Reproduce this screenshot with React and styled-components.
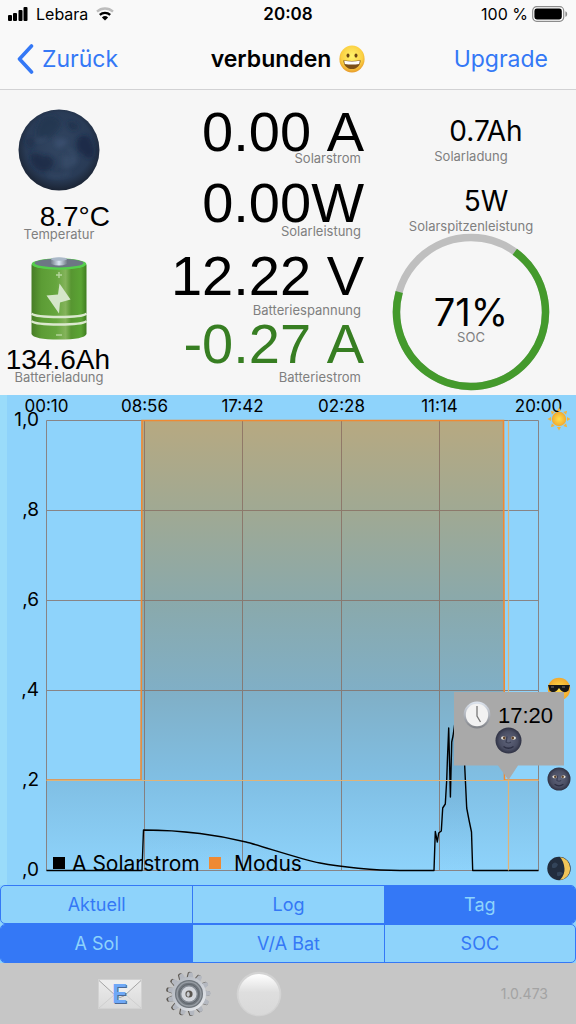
import React, { useState } from 'react'
import styled, { createGlobalStyle } from 'styled-components'

const GlobalStyle = createGlobalStyle`
    *{
        box-sizing: border-box;
    }
    body{
        margin: 0;
        background-color: #f6f6f6;
        color: #000;
        font-family: Inter, 'Noto Sans', sans-serif;
    }
    button{
        font-family: inherit;
        cursor: pointer;
    }
    svg{
        display: block;
    }
`

const blue = '#3478f6'
const sky = '#8ed3fb'

/* ---------- small drawings ---------- */

const SignalIcon = () => (
    <svg width="20" height="14" viewBox="0 0 20 14" aria-hidden="true">
        <rect x="0" y="8" width="4" height="6" rx="1" />
        <rect x="5" y="6" width="4" height="8" rx="1" />
        <rect x="10.5" y="3" width="4" height="11" rx="1" />
        <rect x="15.5" y="0" width="4" height="14" rx="1" />
    </svg>
)

const WifiIcon = () => (
    <svg width="18" height="14" viewBox="0 0 18 14" fill="none" aria-hidden="true">
        <path d="M1 4.6a12 12 0 0 1 16 0" stroke="#bdbdbd" strokeWidth="2.4" />
        <path d="M3.8 7.8a8 8 0 0 1 10.4 0" stroke="#000" strokeWidth="2.4" />
        <path d="M9 13.6 5.9 10.4a4.6 4.6 0 0 1 6.2 0Z" fill="#000" />
    </svg>
)

const BatteryLevelIcon = () => (
    <svg width="36" height="16" viewBox="0 0 36 16" aria-hidden="true">
        <rect x=".7" y=".7" width="31" height="14.6" rx="4" fill="#fff" stroke="#8c8c8c" strokeWidth="1.2" />
        <rect x="2.4" y="2.6" width="27.4" height="10.8" rx="2.4" />
        <path d="M33.4 5.2c2.4.8 2.4 4.8 0 5.6Z" fill="#8c8c8c" />
    </svg>
)

const ChevronIcon = () => (
    <svg width="18" height="30" viewBox="0 0 18 30" fill="none" aria-hidden="true">
        <path d="M15.5 2 3.5 15l12 13" stroke={blue} strokeWidth="3.6" strokeLinecap="round" strokeLinejoin="round" />
    </svg>
)

const GrinIcon = () => (
    <svg width="26" height="28" viewBox="0 0 26 28" role="img" aria-label="verbunden">
        <defs>
            <radialGradient id="grin" cx=".5" cy=".4" r=".6">
                <stop offset="0" stopColor="#fff36b" />
                <stop offset=".7" stopColor="#fbd043" />
                <stop offset="1" stopColor="#e79a2a" />
            </radialGradient>
        </defs>
        <ellipse cx="13" cy="14" rx="12.6" ry="13.4" fill="url(#grin)" />
        <ellipse cx="9" cy="10.6" rx="1.5" ry="2.1" fill="#6b4312" />
        <ellipse cx="17" cy="10.6" rx="1.5" ry="2.1" fill="#6b4312" />
        <path d="M4.4 15.2q8.6 1.6 17.2 0c0 5-3.6 8.8-8.6 8.8s-8.6-3.8-8.6-8.8Z" fill="#7b4f1a" />
        <path d="M5.2 15.8q7.8 1.3 15.6 0l-.6 3.2q-7.2 1.2-14.4 0Z" fill="#fff" />
    </svg>
)

const MoonIcon = () => (
    <svg width="82" height="82" viewBox="0 0 82 82" role="img" aria-label="Neumond">
        <defs>
            <radialGradient id="moon" cx=".5" cy=".45" r=".55">
                <stop offset="0" stopColor="#324662" />
                <stop offset=".75" stopColor="#293b56" />
                <stop offset="1" stopColor="#1b2434" />
            </radialGradient>
            <filter id="soft"><feGaussianBlur stdDeviation="2" /></filter>
            <clipPath id="moonDisc"><circle cx="41" cy="41" r="39" /></clipPath>
        </defs>
        <circle cx="41" cy="41" r="40.5" fill="url(#moon)" />
        <g filter="url(#soft)" clipPath="url(#moonDisc)">
            <path d="M22 12q8-8 17-3 7 5 1 12-6 9-14 9t-8-8Z" fill="#22324d" opacity=".6" />
            <path d="M60 29q8-6 13 2 5 9 2 17-6 3-10-3-10-5-5-16Z" fill="#1a2844" opacity=".8" />
            <path d="M12 46q7-4 12 1 9-1 12 5-1 8-8 10-9 1-14-7Z" fill="#1a2844" opacity=".75" />
            <path d="M49 13q7-1 12 5-3 5-9 2Z" fill="#1e2d49" opacity=".7" />
            <path d="M37 31q8-3 13 1-3 7-12 6Z" fill="#42587a" opacity=".5" />
            <path d="M44 47q10-2 16 4-5 11-16 8Z" fill="#3b5171" opacity=".5" />
            <path d="M6 31q8-4 12 0l-5 10Z" fill="#1e2d49" opacity=".6" />
            <path d="M18 31q7 2 10-4M50 40q8 6 6 12M30 66q12 3 22-2" stroke="#435a7b" strokeWidth="1.5" fill="none" opacity=".7" />
        </g>
    </svg>
)

const BatteryIcon = () => (
    <svg width="56" height="83" viewBox="0 0 56 83" role="img" aria-label="Batterie">
        <defs>
            <linearGradient id="cell">
                <stop offset="0" stopColor="#477d26" />
                <stop offset=".18" stopColor="#5c9c35" />
                <stop offset=".45" stopColor="#66a63e" />
                <stop offset=".62" stopColor="#84b35b" />
                <stop offset=".72" stopColor="#579631" />
                <stop offset=".9" stopColor="#5ba434" />
                <stop offset="1" stopColor="#3f7d20" />
            </linearGradient>
            <linearGradient id="metal">
                <stop offset="0" stopColor="#75808c" />
                <stop offset=".5" stopColor="#dbe7f3" />
                <stop offset="1" stopColor="#737e88" />
            </linearGradient>
        </defs>
        <path d="M.5 8C2 0 54 0 55.5 8v69q-2 5.5-27.5 5.5T.5 77Z" fill="url(#cell)" />
        <ellipse cx="28" cy="7" rx="27.3" ry="5.8" fill="#55cf4b" />
        <ellipse cx="28" cy="6" rx="24.5" ry="4.4" fill="#6d7784" />
        <path d="M20 2q8-3 16 0v5q-8 3-16 0Z" fill="url(#metal)" />
        <ellipse cx="28" cy="2" rx="8" ry="1.7" fill="#aab8c8" />
        <path d="M28 15v6M25 18h6" stroke="#b5d69d" strokeWidth="1.4" />
        <path d="M28.5 26.5 27 37.5 15.5 38.5 28 56.5 29 45.5 39.5 42.5Z" fill="#d5e6ca" />
        <path d="M.5 56.5q3 3.5 27.5 3.5t27.5-3.5M.5 64q3 3.5 27.5 3.5T55.5 64" stroke="#dbe8ce" strokeWidth="2.6" fill="none" />
        <path d="M25 78h6" stroke="#b5d69d" strokeWidth="1.4" />
    </svg>
)

const MailIcon = () => (
    <svg width="44" height="30" viewBox="0 0 44 30" aria-hidden="true">
        <defs>
            <linearGradient id="mail" x2="0" y2="1">
                <stop offset="0" stopColor="#ececec" />
                <stop offset="1" stopColor="#dadada" />
            </linearGradient>
        </defs>
        <rect x=".5" y=".5" width="43" height="29" fill="url(#mail)" stroke="#d2d2d2" />
        <path d="M1 1.5 18 17q4 3 8 0L43 1.5" fill="#ededed" stroke="#a5a5a5" />
        <path d="M1 29 16 16M43 29 28 16" stroke="#cfcfcf" />
        <text x="22.5" y="25" textAnchor="middle" fontFamily="Inter, sans-serif" fontSize="25" fontWeight="700" fill="#4b6894">E</text>
        <text x="21.5" y="24" textAnchor="middle" fontFamily="Inter, sans-serif" fontSize="25" fontWeight="700" fill="#6ea8f7">E</text>
    </svg>
)

const teeth = Array.from({ length: 13 }, (_, i) => i * 360 / 13 + 5)

const GearIcon = () => (
    <svg width="46" height="46" viewBox="0 0 46 46" aria-hidden="true">
        <defs>
            <linearGradient id="gear" x2="1" y2="1">
                <stop offset="0" stopColor="#aeb3bb" />
                <stop offset=".5" stopColor="#c8ccd3" />
                <stop offset="1" stopColor="#eef0f3" />
            </linearGradient>
        </defs>
        {teeth.map(a => (
            <path key={a} d="M20 8 21 1.5q2-1.5 4 0L26 8Z" fill="#5c5750" transform={`translate(-1 0) rotate(${a} 23 23)`} />
        ))}
        {teeth.map(a => (
            <path key={a} d="M20 8 21 2q2-1.5 4 0L26 8Z" fill="#b4b8c0" transform={`rotate(${a} 23 23)`} />
        ))}
        <circle cx="23" cy="23" r="17" fill="url(#gear)" />
        <circle cx="23" cy="23" r="14" fill="#6f757c" />
        <circle cx="23" cy="23" r="12" fill="none" stroke="#969ca3" strokeWidth="1.5" />
        <circle cx="23" cy="23" r="9.5" fill="#858b93" stroke="#5f656c" />
        <circle cx="23" cy="23" r="7.6" fill="#d3d6dc" />
        <circle cx="23" cy="23" r="3.6" fill="#5a5550" />
        <path d="M22 20.5a3 3 0 0 1 0 5.5q-3-2.5 0-5.5Z" fill="#c9ccd1" />
    </svg>
)

const BallIcon = () => (
    <svg width="46" height="46" viewBox="0 0 46 46" aria-hidden="true">
        <defs>
            <linearGradient id="ball" x2="0" y2="1">
                <stop offset="0" stopColor="#fff" />
                <stop offset=".45" stopColor="#dedede" />
                <stop offset="1" stopColor="#d9d9d9" />
            </linearGradient>
        </defs>
        <circle cx="23" cy="23" r="22.3" fill="#d3d3d3" />
        <circle cx="23" cy="23.5" r="20.5" fill="url(#ball)" />
    </svg>
)

const MoonFace = ({ x, y, r }) => (
    <g transform={`translate(${x} ${y}) scale(${r / 13})`}>
        <circle r="13" fill="url(#face)" />
        <path d="M-1.5-4Q-2 0-2.5 1.5 0 3.5 2.5 1.5" fill="none" stroke="#3a3e53" strokeWidth="1.2" />
        <ellipse cx="-5" cy="-2.5" rx="2.5" ry="1.7" fill="#e6e2d8" />
        <ellipse cx="5" cy="-2.5" rx="2.5" ry="1.7" fill="#e6e2d8" />
        <circle cx="-4.2" cy="-2.5" r="1.4" fill="#5e432c" />
        <circle cx="4.2" cy="-2.5" r="1.4" fill="#5e432c" />
        <path d="M-5 6q5 3.5 10 0" fill="none" stroke="#2b2e42" strokeWidth="1.3" />
    </g>
)

/* ---------- chart ---------- */

const LEFT = 46.5
const RIGHT = 538.5
const TOP = 25.5
const BOTTOM = 475.5

const times = ['00:10', '08:56', '17:42', '02:28', '11:14', '20:00']
const levels = ['1,0', ',8', ',6', ',4', ',2', ',0']
const columns = [46.5, 144.5, 242.5, 341.5, 439.5, 538.5]

const levelY = i => TOP + i * 90

const solar = `M${LEFT} ${BOTTOM}H142L143.5 435C160 435 180 436 200 438.5S230 443 246 447S300 464 320 468
    S375 475.5 400 475.5H434L435.3 436.5 437.3 447 438.7 438 441.3 436 442.7 413 445.3 409 446.7 385
    447.5 362 448.7 333 450.4 402 451.7 347 453 341 456 320 460 318 464 350 464.7 371 466.7 413 469 425 471.5 437 472.7 ${BOTTOM}H${RIGHT}`
const modus = `M${LEFT} 385H141L142 ${TOP}H503.5L504.5 385H${RIGHT}`

const Chart = () => (
    <ChartSvg viewBox="0 0 576 490" role="img" aria-label="Verlauf Solarstrom und Modus">
        <defs>
            <linearGradient id="modusFill" gradientUnits="userSpaceOnUse" x1="0" y1={TOP} x2="0" y2={BOTTOM}>
                <stop offset="0" stopColor="#b7a981" />
                <stop offset=".2" stopColor="#a0a993" />
                <stop offset=".4" stopColor="#8aa9ab" />
                <stop offset=".6" stopColor="#80afc6" />
                <stop offset=".8" stopColor="#80bfe4" />
                <stop offset="1" stopColor={sky} />
            </linearGradient>
            <linearGradient id="solarFill" gradientUnits="userSpaceOnUse" x1="0" y1="330" x2="0" y2={BOTTOM}>
                <stop offset="0" stopColor="#4a7a98" stopOpacity=".4" />
                <stop offset="1" stopColor="#6aaede" stopOpacity="0" />
            </linearGradient>
            <radialGradient id="face">
                <stop offset="0" stopColor="#60657c" />
                <stop offset=".7" stopColor="#4a4e63" />
                <stop offset="1" stopColor="#2f3244" />
            </radialGradient>
            <radialGradient id="sun">
                <stop offset="0" stopColor="#ffe14d" />
                <stop offset="1" stopColor="#f2a92e" />
            </radialGradient>
            <linearGradient id="clock" x2="0" y2="1">
                <stop offset="0" stopColor="#dfe6f0" />
                <stop offset="1" stopColor="#7f8186" />
            </linearGradient>
        </defs>

        <rect width="7" height="490" fill="#9adcfa" />

        <path d={`${modus}V${BOTTOM}H${LEFT}Z`} fill="url(#modusFill)" />
        <path d={`${solar}Z`} fill="url(#solarFill)" />

        <g stroke="#866a5e" strokeWidth="1" opacity=".75">
            {columns.map(x => <path key={x} d={`M${x} ${TOP}V${BOTTOM}`} />)}
            {levels.map((l, i) => <path key={l} d={`M${LEFT} ${levelY(i)}H${RIGHT}`} />)}
        </g>

        <path d={modus} fill="none" stroke="#ef8a33" strokeWidth="1.6" />
        <path d={solar} fill="none" stroke="#000" strokeWidth="1.4" strokeLinejoin="round" />
        <path d={`M508.5 ${TOP}V${BOTTOM}M${LEFT} 385.5H${RIGHT}`} stroke="#dfb377" strokeWidth="1.2" />

        <g fontSize="17" textAnchor="middle">
            {times.map((t, i) => <text key={t} x={columns[i]} y="17">{t}</text>)}
        </g>
        <g fontSize="19" textAnchor="end">
            {levels.map((l, i) => <text key={l} x="39" y={levelY(i) + 5}>{l}</text>)}
        </g>

        <rect x="53" y="462" width="12" height="12" />
        <rect x="209" y="462" width="12" height="12" fill="#ef8a33" />
        <g fontSize="21">
            <text x="72" y="476">A Solarstrom</text>
            <text x="234" y="476">Modus</text>
        </g>

        {/* sun */}
        <g transform="translate(559 24)">
            {Array.from({ length: 8 }, (_, i) => (
                <path key={i} d="M-2-8 0-11.5l2 3.5Z" fill="#f3b43c" transform={`rotate(${i * 45})`} />
            ))}
            <circle r="7.2" fill="url(#sun)" />
        </g>
        {/* cool face */}
        <g transform="translate(559 294)">
            <circle r="11.2" fill="url(#sun)" />
            <path d="M-11-4H11L9.5 1.5Q6 5 2 1.5L0-1-2 1.5Q-6 5-9.5 1.5Z" fill="#171717" />
            <path d="M-8-2h3M3-2h3" stroke="#777" />
        </g>
        <MoonFace x={559} y={384} r={11.5} />
        {/* crescent */}
        <g transform="translate(559 473.5)">
            <circle r="11.7" fill="#222d3e" />
            <path d="M1-11.6A11.7 11.7 0 0 1 1 11.6Q6 6 5.5 0 5-7 1-11.6Z" fill="#f0c458" />
            <path d="M-7-4q3-4 6 0-2 5-6 3ZM-2 4q4-2 6 1-4 4-6 2Z" fill="#33445a" />
        </g>

        {/* marker */}
        <path d="M454 297H564V370.5H518L508.5 385 498 370.5H454Z" fill="#a9a9a9" />
        <circle cx="477" cy="320" r="13.4" fill="url(#clock)" />
        <circle cx="477" cy="320" r="11.2" fill="#f2f2f2" />
        <path d="M477 311V321L480.5 327" fill="none" stroke="#777" strokeWidth="1.3" />
        <text x="498" y="328" fontSize="22" fontFamily="'Liberation Sans', Arial, sans-serif">17:20</text>
        <MoonFace x={508.5} y={345.5} r={13} />
    </ChartSvg>
)

/* ---------- metrics ---------- */

const Metric = ({ value, label, ...rest }) => (
    <MetricStyled {...rest}>
        <dd>{value}</dd>
        <dt>{label}</dt>
    </MetricStyled>
)

const Gauge = () => (
    <GaugeStyled>
        <svg width="158" height="158" viewBox="0 0 158 158" fill="none" strokeWidth="7.5" aria-hidden="true">
            <circle cx="79" cy="79" r="74.5" stroke="#bfbfbf" />
            <circle cx="79" cy="79" r="74.5" stroke="#449a2c" pathLength="360" strokeDasharray="249.5 360" transform="rotate(-54 79 79)" />
        </svg>
        <GaugeText>
            <dd>71%</dd>
            <dt>SOC</dt>
        </GaugeText>
    </GaugeStyled>
)

const ranges = ['Aktuell', 'Log', 'Tag']
const series = ['A Sol', 'V/A Bat', 'SOC']

const Segments = ({ label, options, selected, onSelect }) => (
    <SegmentsStyled role="group" aria-label={label}>
        {options.map(option => (
            <Segment
                key={option}
                type="button"
                $active={option === selected}
                aria-pressed={option === selected}
                onClick={() => onSelect(option)}
            >
                {option}
            </Segment>
        ))}
    </SegmentsStyled>
)

const App = () => {

    const [range, setRange] = useState('Tag')
    const [shown, setShown] = useState('A Sol')

    return (
        <>
            <GlobalStyle />
            <Header>
                <StatusBar>
                    <div><SignalIcon /><span>Lebara</span><WifiIcon /></div>
                    <strong>20:08</strong>
                    <div><span>100 %</span><BatteryLevelIcon /></div>
                </StatusBar>
                <NavBar>
                    <NavButton type="button"><ChevronIcon />Zurück</NavButton>
                    <h1>verbunden <GrinIcon /></h1>
                    <NavButton type="button" $end>Upgrade</NavButton>
                </NavBar>
            </Header>
            <main>
                <Dashboard>
                    <SideColumn>
                        <MoonIcon />
                        <Metric value="8.7°C" label="Temperatur" $kind="side" />
                        <BatteryIcon />
                        <Metric value="134.6Ah" label="Batterieladung" $kind="side" />
                    </SideColumn>
                    <MainColumn>
                        <Metric value="0.00 A" label="Solarstrom" $kind="main" />
                        <Metric value="0.00W" label="Solarleistung" $kind="main" $gap={2} />
                        <Metric value="12.22 V" label="Batteriespannung" $kind="main" $gap={8} />
                        <Metric value="-0.27 A" label="Batteriestrom" $kind="main" $gap={7} $color="#377e22" />
                    </MainColumn>
                    <TotalsColumn>
                        <Metric value="0.7Ah" label="Solarladung" $kind="total" $gap={8} />
                        <Metric value="5W" label="Solarspitzenleistung" $kind="total" $gap={8} />
                        <Gauge />
                    </TotalsColumn>
                </Dashboard>
                <ChartPanel>
                    <Chart />
                    <Segments label="Zeitraum" options={ranges} selected={range} onSelect={setRange} />
                    <Segments label="Messwert" options={series} selected={shown} onSelect={setShown} />
                </ChartPanel>
            </main>
            <Toolbar>
                <ToolButton type="button" aria-label="E-Mail"><MailIcon /></ToolButton>
                <ToolButton type="button" aria-label="Einstellungen"><GearIcon /></ToolButton>
                <ToolButton type="button" aria-label="Status"><BallIcon /></ToolButton>
                <Version>1.0.473</Version>
            </Toolbar>
        </>
    )
}

const Header = styled.header`
    background-color: #f9f9f9;
    border-bottom: 1px solid #d2d2d4;
`

const StatusBar = styled.div`
    display: grid;
    grid-template-columns: 1fr auto 1fr;
    align-items: center;
    height: 28px;
    padding: 0 8px;
    font-size: 16px;
    div{
        display: flex;
        align-items: center;
        gap: 8px;
    }
    div:last-child{
        justify-content: flex-end;
        gap: 4px;
    }
    strong{
        font-size: 17px;
        font-weight: 600;
    }
`

const NavBar = styled.nav`
    display: grid;
    grid-template-columns: 1fr auto 1fr;
    align-items: center;
    height: 61px;
    padding: 0 16px;
    h1{
        display: flex;
        align-items: center;
        gap: 8px;
        margin: 0;
        font-size: 23px;
        font-weight: 600;
    }
`

const NavButton = styled.button`
    display: flex;
    align-items: center;
    justify-self: ${p => p.$end ? 'end' : 'start'};
    gap: 8px;
    padding: ${p => p.$end ? '0 12px 0 0' : '0'};
    border: none;
    background: none;
    color: ${blue};
    font-size: 23px;
`

const Dashboard = styled.section`
    display: grid;
    grid-template-columns: 118fr 248fr 210fr;
    min-height: 305px;
`

const Column = styled.div`
    display: flex;
    flex-direction: column;
    min-width: 0;
`

const SideColumn = styled(Column)`
    align-items: center;
    padding-top: 19px;
    svg{
        margin-bottom: 16px;
    }
    dl + svg{
        margin-top: 16px;
        margin-bottom: 10px;
    }
`

const MainColumn = styled(Column)`
    padding: 23px 2px 0 0;
    gap: 19px;
    > :last-child{
        margin-top: -11px;
    }
`

const TotalsColumn = styled(Column)`
    align-items: center;
    padding-top: 31px;
    > :nth-child(2){
        margin-top: 28px;
    }
`

const kinds = {
    side: `
        width: 100%;
        dd{
            padding-right: 8px;
            font: 28px/20px 'Liberation Sans', Arial, sans-serif;
            text-align: right;
        }
        dt{
            text-align: center;
        }
    `,
    main: `
        text-align: right;
        dd{
            font: 56px/38px 'Liberation Sans', Arial, sans-serif;
            font-kerning: none;
        }
        dt{
            padding-right: 3px;
        }
    `,
    total: `
        text-align: center;
        dd{
            padding-left: 30px;
            font-size: 28px;
            line-height: 20px;
        }
    `,
}

const MetricStyled = styled.dl`
    display: flex;
    flex-direction: column;
    gap: ${p => p.$gap || 0}px;
    margin: 0;
    white-space: nowrap;
    dd{
        margin: 0;
        color: ${p => p.$color || '#000'};
    }
    dt{
        color: #7f7f7f;
        font-size: 13px;
        line-height: 14px;
    }
    ${p => kinds[p.$kind]}
`

const GaugeStyled = styled.div`
    display: grid;
    place-items: center;
    > *{
        grid-area: 1 / 1;
    }
`

const GaugeText = styled.dl`
    margin: 0;
    padding-top: 14px;
    text-align: center;
    dd{
        margin: 0;
        font-size: 38px;
        line-height: 36px;
    }
    dt{
        color: #7f7f7f;
        font-size: 13px;
        line-height: 14px;
    }
`

const ChartPanel = styled.section`
    background-color: ${sky};
`

const ChartSvg = styled.svg`
    width: 100%;
    height: auto;
    font-family: Inter, 'Noto Sans', sans-serif;
`

const SegmentsStyled = styled.div`
    display: grid;
    grid-template-columns: repeat(3, 1fr);
    height: 39px;
    border: 1px solid ${blue};
    border-radius: 5px;
    overflow: hidden;
`

const Segment = styled.button`
    padding: 0;
    border: none;
    background-color: ${p => p.$active ? blue : 'transparent'};
    color: ${p => p.$active ? sky : blue};
    font-size: 18px;
    & + &{
        border-left: 1px solid ${blue};
    }
`

const Toolbar = styled.footer`
    display: flex;
    align-items: center;
    gap: 24px;
    min-height: 61px;
    padding: 0 28px 0 98px;
    background-color: #c6c6c6;
`

const ToolButton = styled.button`
    padding: 0;
    border: none;
    background: none;
`

const Version = styled.span`
    margin-left: auto;
    color: #a3a3a3;
    font-size: 14px;
`

export default App
